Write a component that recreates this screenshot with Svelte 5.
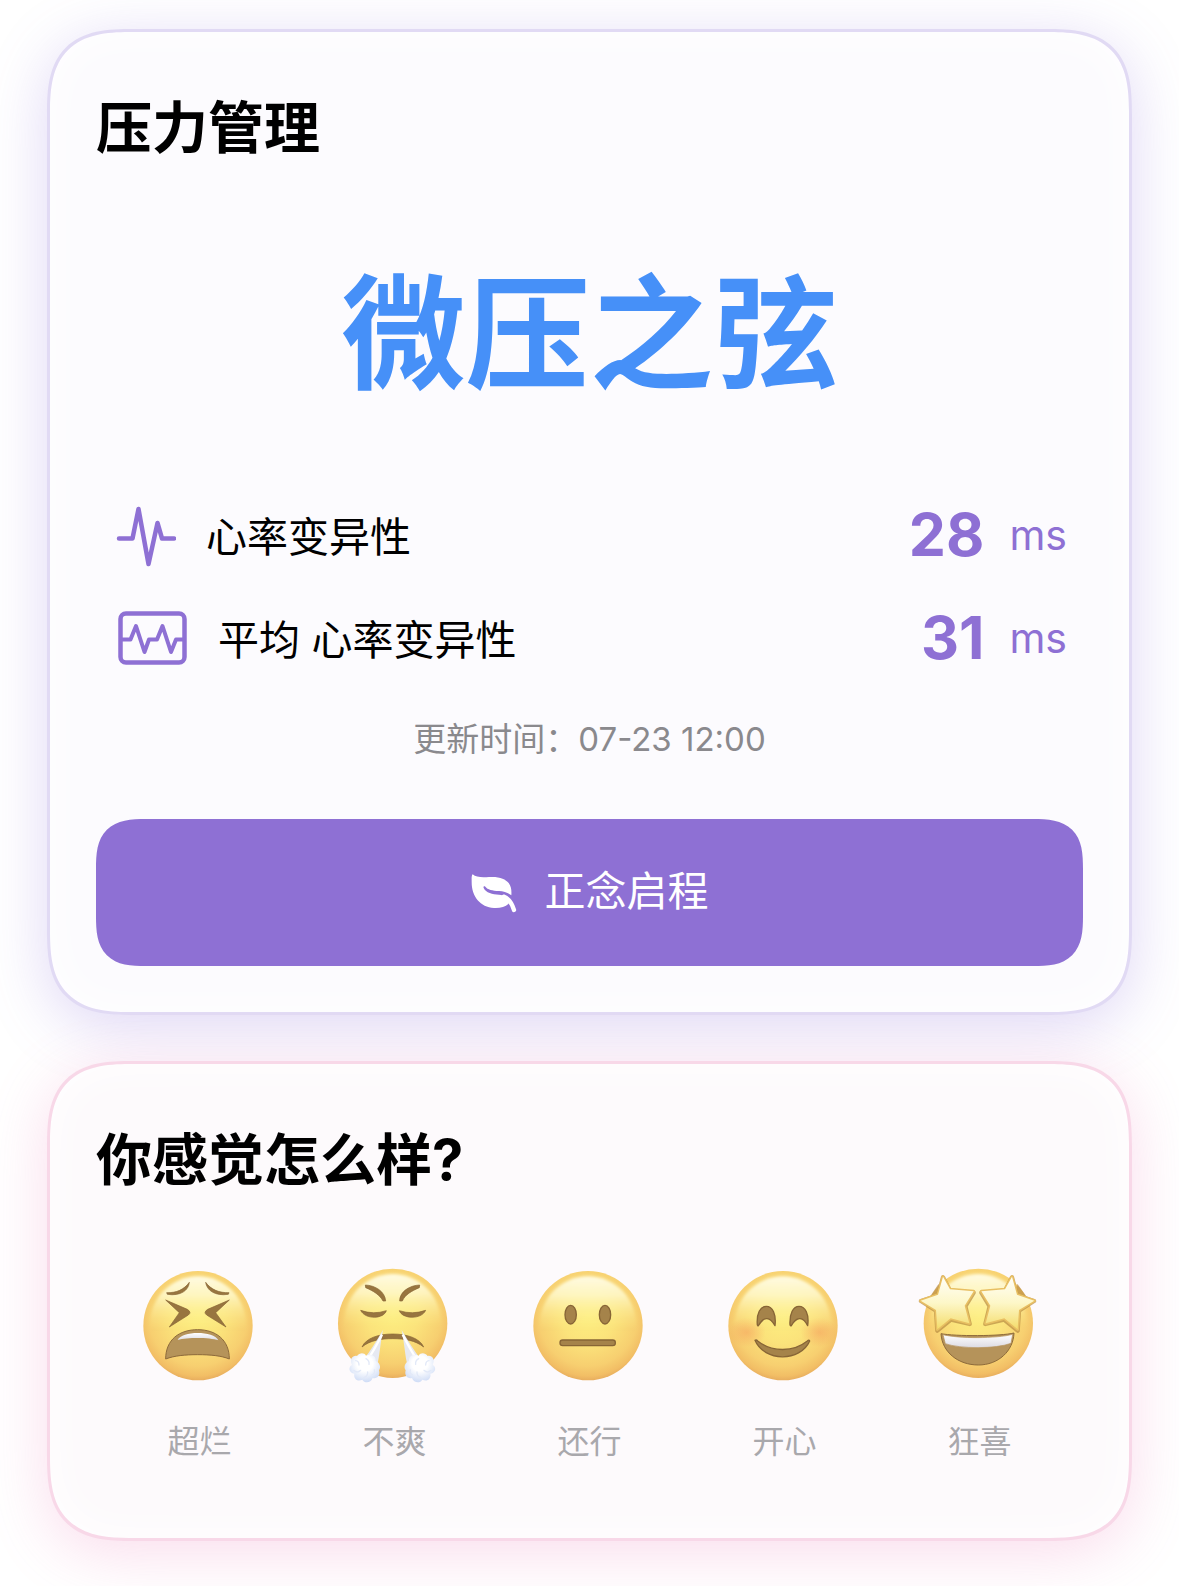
<script lang="ts">
  const metrics = [
    { icon: 'pulse', label: '心率变异性', value: 28 },
    { icon: 'monitor', label: '平均 心率变异性', value: 31 },
  ];

  const moods = [
    { id: 'awful', label: '超烂', viewBox: '31 45 360 360', cx: 205, cy: 227 },
    { id: 'upset', label: '不爽', viewBox: '46 45 360 360', cx: 219, cy: 220 },
    { id: 'okay', label: '还行', viewBox: '31 45 360 360', cx: 205, cy: 227 },
    { id: 'happy', label: '开心', viewBox: '31 45 360 360', cx: 205, cy: 227 },
    { id: 'thrilled', label: '狂喜', viewBox: '46 45 360 360', cx: 221, cy: 220 },
  ];

  let selected = $state('');
</script>

<main class="page">
  <section class="card stress">
    <h2>压力管理</h2>
    <p class="level">微压之弦</p>

    <div class="metrics">
      {#each metrics as metric}
        <div class="metric">
          {#if metric.icon === 'pulse'}
            <svg class="icon-pulse" viewBox="0 0 60 64" aria-hidden="true">
              <path d="M3 33.5H16.5L22.5 4L32.5 59L41.5 18L46 33.5H58" />
            </svg>
          {:else}
            <svg class="icon-monitor" viewBox="0 0 72 64" aria-hidden="true">
              <rect x="4.5" y="5.5" width="64" height="49" rx="5.5" />
              <path class="thin" d="M6 31.5H14.5L20 18L28.5 44L33 31.5H41L46.5 18L55 44L60 31.5H67" />
            </svg>
          {/if}
          <span class="metric-label">{metric.label}</span>
          <strong>{metric.value}</strong>
          <span class="unit">ms</span>
        </div>
      {/each}
    </div>

    <p class="updated">更新时间：07-23 12:00</p>

    <button class="start" type="button">
      <svg viewBox="94 98 138 120" aria-hidden="true">
        <path class="leaf" d="M99 102C109 111 127 112 148 110C180 108 197 116 207 128C215 138 216 152 215 165C204 156 192 153 178 152C158 151 144 148 137 139C134 136 130 139 132 143C139 158 158 162 178 163C196 164 208 174 207 190C196 200 181 204 163 203C122 201 96 169 96 126C96 117 95 106 99 102Z" />
        <path class="stem" d="M192 169C209 175 217 190 223 209" />
      </svg>
      <span>正念启程</span>
    </button>
  </section>

  <section class="card mood">
    <h2>你感觉怎么样?</h2>

    <div class="moods">
      {#each moods as mood}
        <button
          class="mood-item"
          type="button"
          aria-pressed={selected === mood.id}
          onclick={() => (selected = mood.id)}
        >
          <svg viewBox={mood.viewBox} aria-hidden="true">
            <defs>
              <radialGradient id="{mood.id}-skin" cx="0.5" cy="0.42" r="0.6">
                <stop offset="0" stop-color="#fdee80" />
                <stop offset="0.4" stop-color="#fbe37b" />
                <stop offset="0.75" stop-color="#f7cf70" />
                <stop offset="0.9" stop-color="#f2be65" />
                <stop offset="1" stop-color="#e3a65b" />
              </radialGradient>
              <linearGradient id="{mood.id}-shine" x1="0" y1="0" x2="0" y2="1">
                <stop offset="0" stop-color="#fffbe2" />
                <stop offset="0.2" stop-color="#fffad0" stop-opacity="0.8" />
                <stop offset="0.55" stop-color="#fdf184" stop-opacity="0" />
              </linearGradient>
              <linearGradient id="{mood.id}-teeth" x1="0" y1="0" x2="0" y2="1">
                <stop offset="0" stop-color="#ffffff" />
                <stop offset="1" stop-color="#dcdbe2" />
              </linearGradient>
              <linearGradient id="{mood.id}-star" x1="0" y1="0" x2="0" y2="1">
                <stop offset="0.1" stop-color="#fffdf0" />
                <stop offset="0.5" stop-color="#fdf7c8" />
                <stop offset="1" stop-color="#f4dc6a" />
              </linearGradient>
              <radialGradient id="{mood.id}-blush">
                <stop offset="0" stop-color="#f59a5c" stop-opacity="0.5" />
                <stop offset="1" stop-color="#f59a5c" stop-opacity="0" />
              </radialGradient>
              <radialGradient id="{mood.id}-cloud" cx="0.5" cy="0.35" r="0.65">
                <stop offset="0.4" stop-color="#ffffff" />
                <stop offset="1" stop-color="#cfdcf6" />
              </radialGradient>
              <filter id="{mood.id}-soft" x="-0.1" y="-0.1" width="1.2" height="1.2">
                <feGaussianBlur stdDeviation="5" />
              </filter>
            </defs>

            <circle cx={mood.cx} cy={mood.cy} r="164" fill="url(#{mood.id}-skin)" />
            <ellipse
              cx={mood.cx}
              cy={mood.cy - 5}
              rx="144"
              ry="143"
              fill="url(#{mood.id}-shine)"
              filter="url(#{mood.id}-soft)"
            />

            {#if mood.id === 'awful'}
              <path class="feature" d="M111 128C140 129 163 119 179 97C177 121 153 139 113 133ZM298 128C269 129 244 119 228 97C231 121 256 139 296 133Z" />
              <path class="feature" d="M108 150L173 178Q187 187 176 195L119 231L149 188ZM299 150L234 178Q220 187 231 195L289 231L258 188Z" />
              <path class="mouth" d="M108 327C108 269 149 239 204 239C258 239 299 269 299 327C275 317 242 314 204 314C166 314 134 317 108 327Z" />
              <path d="M144 270C157 242 252 242 266 271C239 262 174 262 144 270Z" fill="url(#{mood.id}-teeth)" />
            {:else if mood.id === 'upset'}
              <path class="feature" d="M137 105C166 106 196 124 198 153L190 153C180 134 161 123 138 113ZM300 105C271 106 240 124 240 153L248 153C256 134 276 123 299 113Z" />
              <path class="feature" d="M123 181Q161 195 200 182C193 207 137 210 123 181ZM239 182Q279 195 318 181C305 210 247 207 239 182Z" />
              <path class="feature" d="M127 291C139 264 177 252 219 252C261 252 300 264 312 291C287 271 254 266 219 266C184 266 151 271 127 291Z" />
              {#each [0, 1] as side}
                <g transform={side ? 'matrix(-1 0 0 1 436 0)' : ''}>
                  <path d="M190 240C182 278 181 309 174 340L132 329C152 302 169 276 190 240Z" fill="#e6e9f2" />
                  <path d="M187 254C171 285 160 306 143 330" fill="none" stroke="#fff" stroke-width="7" />
                  <path d="M112 318C120 307 134 308 139 317C155 310 169 317 168 333C180 337 185 351 178 361C183 377 171 388 159 384C153 400 135 401 128 389C113 396 101 386 104 371C87 369 85 350 97 345C88 327 100 315 112 318Z" fill="url(#{mood.id}-cloud)" />
                  <path d="M108 332Q118 333 118 345M139 326Q150 332 148 343M102 361Q113 371 123 361M132 383Q145 379 144 366M157 375Q167 371 164 360" fill="none" stroke="#e2e9f8" stroke-width="4" stroke-linecap="round" />
                </g>
              {/each}
            {:else if mood.id === 'okay'}
              <ellipse class="eye" cx="153" cy="194" rx="17" ry="28" />
              <ellipse class="eye" cx="256" cy="194" rx="17" ry="28" />
              <rect class="eye" x="121" y="270" width="166" height="17" rx="8" />
            {:else if mood.id === 'happy'}
              <ellipse cx="96" cy="247" rx="57" ry="44" fill="url(#{mood.id}-blush)" />
              <ellipse cx="314" cy="247" rx="57" ry="44" fill="url(#{mood.id}-blush)" />
              <path class="eye" d="M128 225C125 190 137 169 155 169C174 169 185 193 181 227C174 215 168 207 157 206C144 205 137 217 130 228ZM226 225C224 190 236 169 253 169C272 169 284 193 279 227C273 215 267 207 256 206C243 205 236 217 229 228Z" />
              <path class="eye" d="M121 271Q125 268 129 273C172 307 236 307 278 273Q283 268 285 273C257 337 149 336 121 271Z" />
            {:else}
              <path d="M69 150L102 101L107 128ZM373 150L338 101L335 128Z" fill="#b98c42" opacity="0.7" />
              <path class="mouth" d="M109 251C149 259 289 259 328 249C326 303 281 345 221 345C160 345 112 306 109 251Z" />
              <path d="M115 254C160 266 276 266 324 253L319 280C274 297 166 297 122 281Z" fill="url(#{mood.id}-teeth)" stroke="#b7935a" stroke-width="2" />
              {#each [0, 1] as side}
                <g transform={side ? 'matrix(-1 0 0 1 437 0)' : ''}>
                  <path class="star-shadow" d="M115 82L136 122L207 128L182 169L195 222L139 209L98 242L94 182L49 153L101 136Z" />
                  <path class="star" d="M115 80L136 118L207 124L180 167L194 220L138 205L98 238L94 180L48 152L100 134Z" fill="url(#{mood.id}-star)" />
                </g>
              {/each}
            {/if}
          </svg>
          <span>{mood.label}</span>
        </button>
      {/each}
    </div>
  </section>
</main>

<style>
  :global(body) {
    background: #fff;
  }

  .page {
    display: flex;
    flex-direction: column;
    gap: 46px;
    padding: 29px 47px 45px;
    overflow: hidden;
    font-family: Inter, 'Noto Sans CJK SC', sans-serif;
    color: #000;
  }

  .card {
    padding: 64px 46px 46px;
    border: 3px solid;
    border-radius: 66px;
  }

  .stress {
    background: #fcfbfe;
    border-color: #e1daf4;
    box-shadow:
      0 12px 60px rgba(130, 100, 215, 0.26),
      inset 0 0 48px #fff;
  }

  .mood {
    padding-bottom: 76px;
    background: #fdfafc;
    border-color: #f8d8e8;
    box-shadow:
      0 12px 60px rgba(236, 110, 175, 0.24),
      inset 0 0 48px #fff;
  }

  h2,
  p {
    margin: 0;
  }

  h2 {
    font-size: 56px;
    font-weight: 700;
    line-height: 64px;
  }

  .level {
    margin-top: 100px;
    font-size: 124px;
    font-weight: 700;
    line-height: 148px;
    text-align: center;
    color: #4690f8;
  }

  .metrics {
    display: flex;
    flex-direction: column;
    gap: 39px;
    margin-top: 97px;
    padding: 0 16px 0 20px;
  }

  .metric {
    display: flex;
    align-items: center;
    height: 64px;
    color: #8e70d4;
  }

  .metric svg {
    height: 64px;
    margin-right: 30px;
    fill: none;
    stroke: currentColor;
    stroke-width: 4.5;
    stroke-linecap: round;
    stroke-linejoin: round;
  }

  .metric svg .thin {
    stroke-width: 4;
    stroke-linecap: butt;
  }

  .icon-pulse {
    width: 60px;
  }

  .icon-monitor {
    width: 72px;
  }

  .metric-label {
    flex: 1;
    font-size: 41px;
    line-height: 64px;
    color: #000;
  }

  .metric strong {
    font-size: 59px;
    font-weight: 700;
    line-height: 60px;
    padding-bottom: 4px;
  }

  .unit {
    margin-left: 25px;
    padding-bottom: 4px;
    font-size: 41px;
    line-height: 60px;
  }

  .updated {
    margin-top: 47px;
    font-size: 33px;
    line-height: 40px;
    text-align: center;
    color: #8a898d;
  }

  button {
    border: 0;
    font: inherit;
    cursor: pointer;
  }

  .start {
    display: flex;
    align-items: center;
    justify-content: center;
    gap: 28px;
    width: 100%;
    height: 147px;
    margin-top: 60px;
    border-radius: 38px;
    background: #8e70d4;
    font-size: 41px;
    line-height: 60px;
    color: #fff;
  }

  .start svg {
    width: 46px;
    height: 40px;
  }

  .start span {
    padding-bottom: 4px;
  }

  .leaf {
    fill: #fff;
  }

  .stem {
    fill: none;
    stroke: #fff;
    stroke-width: 13;
    stroke-linecap: round;
  }

  .moods {
    display: grid;
    grid-template-columns: repeat(5, 1fr);
    margin-top: 73px;
    padding: 0 6px;
  }

  .mood-item {
    display: flex;
    flex-direction: column;
    align-items: center;
    gap: 37px;
    padding: 0;
    background: none;
    font-size: 32px;
    line-height: 40px;
    color: #a9a8ac;
  }

  .mood-item svg {
    width: 120px;
    height: 120px;
    overflow: visible;
  }

  .feature {
    fill: #98753f;
    stroke: #866333;
    stroke-width: 2;
    stroke-linejoin: round;
  }

  .eye {
    fill: #a5834a;
    stroke: #876536;
    stroke-width: 4;
    stroke-linejoin: round;
  }

  .mouth {
    fill: #b5935a;
    stroke: #8d6a3a;
    stroke-width: 3;
    stroke-linejoin: round;
  }

  .star {
    stroke: #e8bf62;
    stroke-width: 9;
    stroke-linejoin: round;
    paint-order: stroke;
  }

  .star-shadow {
    fill: #b98c42;
    stroke: #b98c42;
    stroke-width: 13;
    stroke-linejoin: round;
    opacity: 0.7;
  }

  /* continuous corners where the browser can draw them */
  @supports (corner-shape: superellipse(1.5)) {
    .card {
      border-radius: 86px;
      corner-shape: superellipse(1.5);
    }

    .start {
      border-radius: 50px;
      corner-shape: superellipse(1.5);
    }
  }
</style>
